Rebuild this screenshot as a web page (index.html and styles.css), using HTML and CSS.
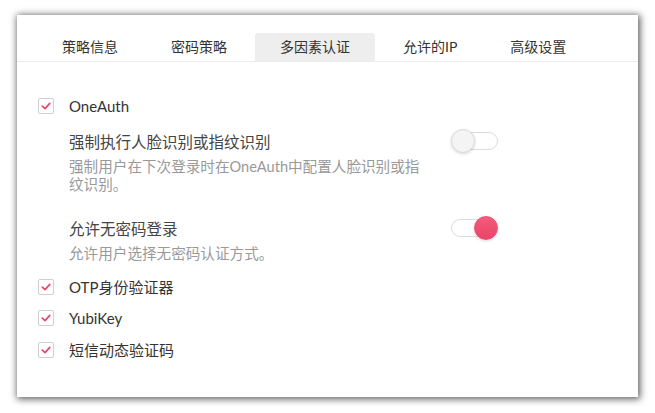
FILE: index.html
```html
<!DOCTYPE html>
<html lang="zh-CN">
<head>
    <meta charset="UTF-8">
    <title>多因素认证</title>
    <link rel="stylesheet" href="styles.css">
</head>
<body>

<div class="panel">
    <ul class="tabs">
        <li class="tab">策略信息</li>
        <li class="tab">密码策略</li>
        <li class="tab active">多因素认证</li>
        <li class="tab">允许的IP</li>
        <li class="tab">高级设置</li>
    </ul>

    <div class="content">
        <div class="check-row">
            <span class="checkbox"><svg viewBox="0 0 16 16"><path d="M3.8 8.2 L6.9 11 L12.3 5"/></svg></span>
            <span class="check-label">OneAuth</span>
        </div>

        <div class="sub-options">
            <div class="sub-option">
                <div class="sub-head">
                    <span class="sub-title">强制执行人脸识别或指纹识别</span>
                    <span class="toggle"><span class="knob"></span></span>
                </div>
                <p class="sub-desc">强制用户在下次登录时在OneAuth中配置人脸识别或指纹识别。</p>
            </div>
            <div class="sub-option">
                <div class="sub-head">
                    <span class="sub-title">允许无密码登录</span>
                    <span class="toggle on"><span class="knob"></span></span>
                </div>
                <p class="sub-desc">允许用户选择无密码认证方式。</p>
            </div>
        </div>

        <div class="check-row">
            <span class="checkbox"><svg viewBox="0 0 16 16"><path d="M3.8 8.2 L6.9 11 L12.3 5"/></svg></span>
            <span class="check-label">OTP身份验证器</span>
        </div>
        <div class="check-row">
            <span class="checkbox"><svg viewBox="0 0 16 16"><path d="M3.8 8.2 L6.9 11 L12.3 5"/></svg></span>
            <span class="check-label">YubiKey</span>
        </div>
        <div class="check-row">
            <span class="checkbox"><svg viewBox="0 0 16 16"><path d="M3.8 8.2 L6.9 11 L12.3 5"/></svg></span>
            <span class="check-label">短信动态验证码</span>
        </div>
    </div>
</div>

</body>
</html>
```

FILE: styles.css
```css
body {
    margin: 0;
    padding: 15px 17px;
    background: #ffffff;
    font-family: Lato, "Noto Sans CJK SC", sans-serif;
    color: #333;
}

.panel {
    width: 621px;
    height: 382px;
    background: #fff;
    box-shadow: 1px 1px 7px 1px rgba(0, 0, 0, 0.65);
    box-sizing: border-box;
    padding-top: 18px;
}

.tabs {
    list-style: none;
    margin: 0;
    padding: 0 0 0 20px;
    display: flex;
    border-bottom: 1px solid #ececec;
}

.tab {
    height: 28px;
    line-height: 28px;
    padding: 0 25px;
    margin-right: 3px;
    font-size: 14px;
    color: #333;
    border-radius: 3px 3px 0 0;
}

.tab.active {
    background: #eeeeee;
}

.content {
    padding: 32px 0 0 21px;
}

.check-row {
    display: flex;
    align-items: center;
    height: 24px;
    margin-bottom: 7.5px;
}

.checkbox {
    width: 16px;
    height: 16px;
    border: 1px solid #cfcfcf;
    border-radius: 2px;
    box-sizing: border-box;
    display: flex;
    margin-right: 15px;
}

.checkbox svg {
    width: 14px;
    height: 14px;
    fill: none;
    stroke: #f0476b;
    stroke-width: 2;
    stroke-linecap: round;
    stroke-linejoin: round;
}

.check-label {
    font-size: 15px;
    color: #333;
}

.sub-options {
    padding: 4px 0 0 31px;
    margin-bottom: 12px;
}

.sub-option {
    width: 429px;
    margin-bottom: 23px;
}

.sub-option:last-child {
    margin-bottom: 0;
}

.sub-head {
    display: flex;
    justify-content: space-between;
    align-items: center;
    height: 22px;
}

.sub-title {
    font-size: 15.5px;
    color: #444;
}

.sub-desc {
    margin: 6px 0 0;
    max-width: 356px;
    font-size: 14.6px;
    line-height: 18px;
    color: #999;
}

.toggle {
    position: relative;
    width: 47px;
    height: 24px;
    display: flex;
    align-items: center;
}

.toggle::before {
    content: "";
    display: block;
    margin-left: 3px;
    width: 44px;
    height: 18px;
    border: 1px solid #dcdcdc;
    border-radius: 9px;
    background: #fff;
    box-sizing: border-box;
}

.knob {
    position: absolute;
    left: 0;
    top: 0;
    width: 24px;
    height: 24px;
    border-radius: 50%;
    background: #f4f4f4;
    border: 1px solid #dadada;
    box-sizing: border-box;
    box-shadow: 0 1px 3px rgba(0, 0, 0, 0.15);
}

.toggle.on::before {
    margin-left: 0;
}

.toggle.on .knob {
    left: 23px;
    background: linear-gradient(#f45b7b, #ea4469);
    border-color: #ee5072;
}
```
